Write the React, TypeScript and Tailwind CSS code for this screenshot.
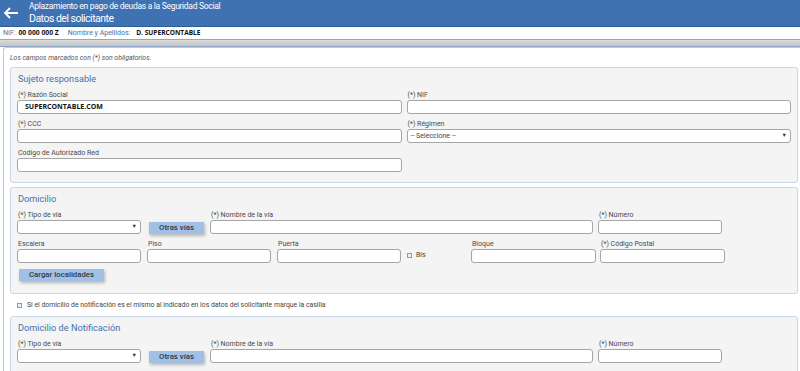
import React from "react";

const Label = ({ children, className = "" }: { children?: React.ReactNode; className?: string }) => (
  <div className={`h-[10px] leading-[10px] text-[7px] text-[#4a4a4a] whitespace-nowrap pl-[1px] ${className}`}>{children}</div>
);

const Input = ({ children, className = "" }: { children?: React.ReactNode; className?: string }) => (
  <div className={`h-[14px] bg-white border border-[#a5a5a5] rounded-[3px] flex items-center ${className}`}>{children}</div>
);

const Select = ({ text = "", className = "" }: { text?: string; className?: string }) => (
  <Input className={`justify-between px-[3px] ${className}`}>
    <span className="text-[7px] text-[#444]">{text}</span>
    <span className="text-[5.5px] text-[#333] leading-none">▼</span>
  </Input>
);

const Btn = ({ children, className = "" }: { children?: React.ReactNode; className?: string }) => (
  <div
    className={`h-[12px] bg-[#a2c0e5] text-[#2e3a4a] text-[7.8px] font-medium flex items-center justify-center shadow-[1px_2px_3px_rgba(0,0,0,0.25)] ${className}`}
  >
    {children}
  </div>
);

const Section = ({ title, children, className = "" }: { title: string; children?: React.ReactNode; className?: string }) => (
  <div className={`bg-[#f4f4f4] border border-[#c9d6e5] rounded-[3px] pl-[6px] pr-[6px] pt-[4px] ${className}`}>
    <div className="h-[14px] leading-[14px] text-[9.2px] text-[#4570a8] pl-[1px] mb-[4px]">{title}</div>
    {children}
  </div>
);

const ViaRow = () => (
  <div className="flex items-end">
    <div className="w-[124px]">
      <Label>(*) Tipo de vía</Label>
      <Select />
    </div>
    <Btn className="w-[55px] ml-[8px]">Otras vías</Btn>
    <div className="w-[383px] ml-[6px]">
      <Label>(*) Nombre de la vía</Label>
      <Input />
    </div>
    <div className="w-[124px] ml-[5px]">
      <Label>(*) Número</Label>
      <Input />
    </div>
  </div>
);

export default function App() {
  return (
    <div className="w-[800px] h-[371px] overflow-hidden bg-white font-['Roboto',sans-serif]">
      {/* header */}
      <div className="h-[27px] bg-[#3e72b3] border-b border-[#2f5d96] flex items-center">
        <svg width="16" height="12" viewBox="0 0 16 12" className="ml-[3px]">
          <path d="M15 6H2M7 1L2 6l5 5" stroke="white" strokeWidth="1.8" fill="none" />
        </svg>
        <div className="ml-[10px] text-white">
          <div className="text-[8.5px] leading-[11px] tracking-[-0.3px]">Aplazamiento en pago de deudas a la Seguridad Social</div>
          <div className="text-[10.5px] leading-[13px] tracking-[-0.5px]">Datos del solicitante</div>
        </div>
      </div>
      {/* NIF strip */}
      <div className="h-[12px] flex items-center pl-[3px] text-[7px] whitespace-nowrap">
        <span className="text-[#4a6fa5]">NIF:</span>
        <span className="ml-[3px] font-bold text-[#111] font-['Open_Sans',sans-serif] text-[6.8px]">00 000 000 Z</span>
        <span className="ml-[9px] text-[#4a6fa5]">Nombre y Apellidos:</span>
        <span className="ml-[6px] font-bold text-[#111] font-['Open_Sans',sans-serif] text-[6.6px]">D. SUPERCONTABLE</span>
      </div>
      {/* gray bar */}
      <div className="h-[8px] bg-gradient-to-b from-[#dcdcdc] to-[#c4c4c4] border-t border-b border-[#8fa8c9]" />
      {/* main */}
      <div className="ml-[3px] border-l border-t border-[#bccbe0] rounded-tl-[3px] pl-[6px] pr-[2px] pt-[5px]">
        <div className="h-[10px] leading-[10px] text-[6.9px] italic text-[#555] mb-[4px]">
          Los campos marcados con (*) son obligatorios.
        </div>
        <Section title="Sujeto responsable" className="pb-[10px]">
          <div className="grid grid-cols-2 gap-x-[5px] gap-y-[5px]">
            <div>
              <Label>(*) Razón Social</Label>
              <Input className="px-[7px]">
                <span className="text-[7px] font-bold text-[#111] font-['Open_Sans',sans-serif]">SUPERCONTABLE.COM</span>
              </Input>
            </div>
            <div>
              <Label>(*) NIF</Label>
              <Input />
            </div>
            <div>
              <Label>(*) CCC</Label>
              <Input />
            </div>
            <div>
              <Label>(*) Régimen</Label>
              <Select text="-- Seleccione --" />
            </div>
            <div>
              <Label>Codigo de Autorizado Red</Label>
              <Input />
            </div>
          </div>
        </Section>
        <Section title="Domicilio" className="mt-[4px] pb-[12px]">
          <ViaRow />
          <div className="flex items-end mt-[5px]">
            <div className="w-[124px]">
              <Label>Escalera</Label>
              <Input />
            </div>
            <div className="w-[124px] ml-[6px]">
              <Label>Piso</Label>
              <Input />
            </div>
            <div className="w-[124px] ml-[6px]">
              <Label>Puerta</Label>
              <Input />
            </div>
            <div className="w-[70px] self-start mt-[10px] flex items-center pl-[6px] pt-[1px]">
              <div className="w-[5px] h-[5px] border border-[#999] bg-[#f0f0f0]" />
              <span className="ml-[4px] text-[7px] text-[#444]">Bis</span>
            </div>
            <div className="w-[125px]">
              <Label>Bloque</Label>
              <Input />
            </div>
            <div className="w-[125px] ml-[4px]">
              <Label>(*) Código Postal</Label>
              <Input />
            </div>
          </div>
          <Btn className="w-[85px] ml-[2px] mt-[6px]">Cargar localidades</Btn>
        </Section>
        <div className="h-[22px] flex items-center pl-[7px]">
          <div className="w-[5px] h-[5px] border border-[#999] bg-[#f0f0f0]" />
          <span className="ml-[5px] text-[6.85px] text-[#444]">
            Si el domicilio de notificación es el mismo al indicado en los datos del solicitante marque la casilla
          </span>
        </div>
        <Section title="Domicilio de Notificación" className="pb-[12px]">
          <ViaRow />
        </Section>
      </div>
    </div>
  );
}
